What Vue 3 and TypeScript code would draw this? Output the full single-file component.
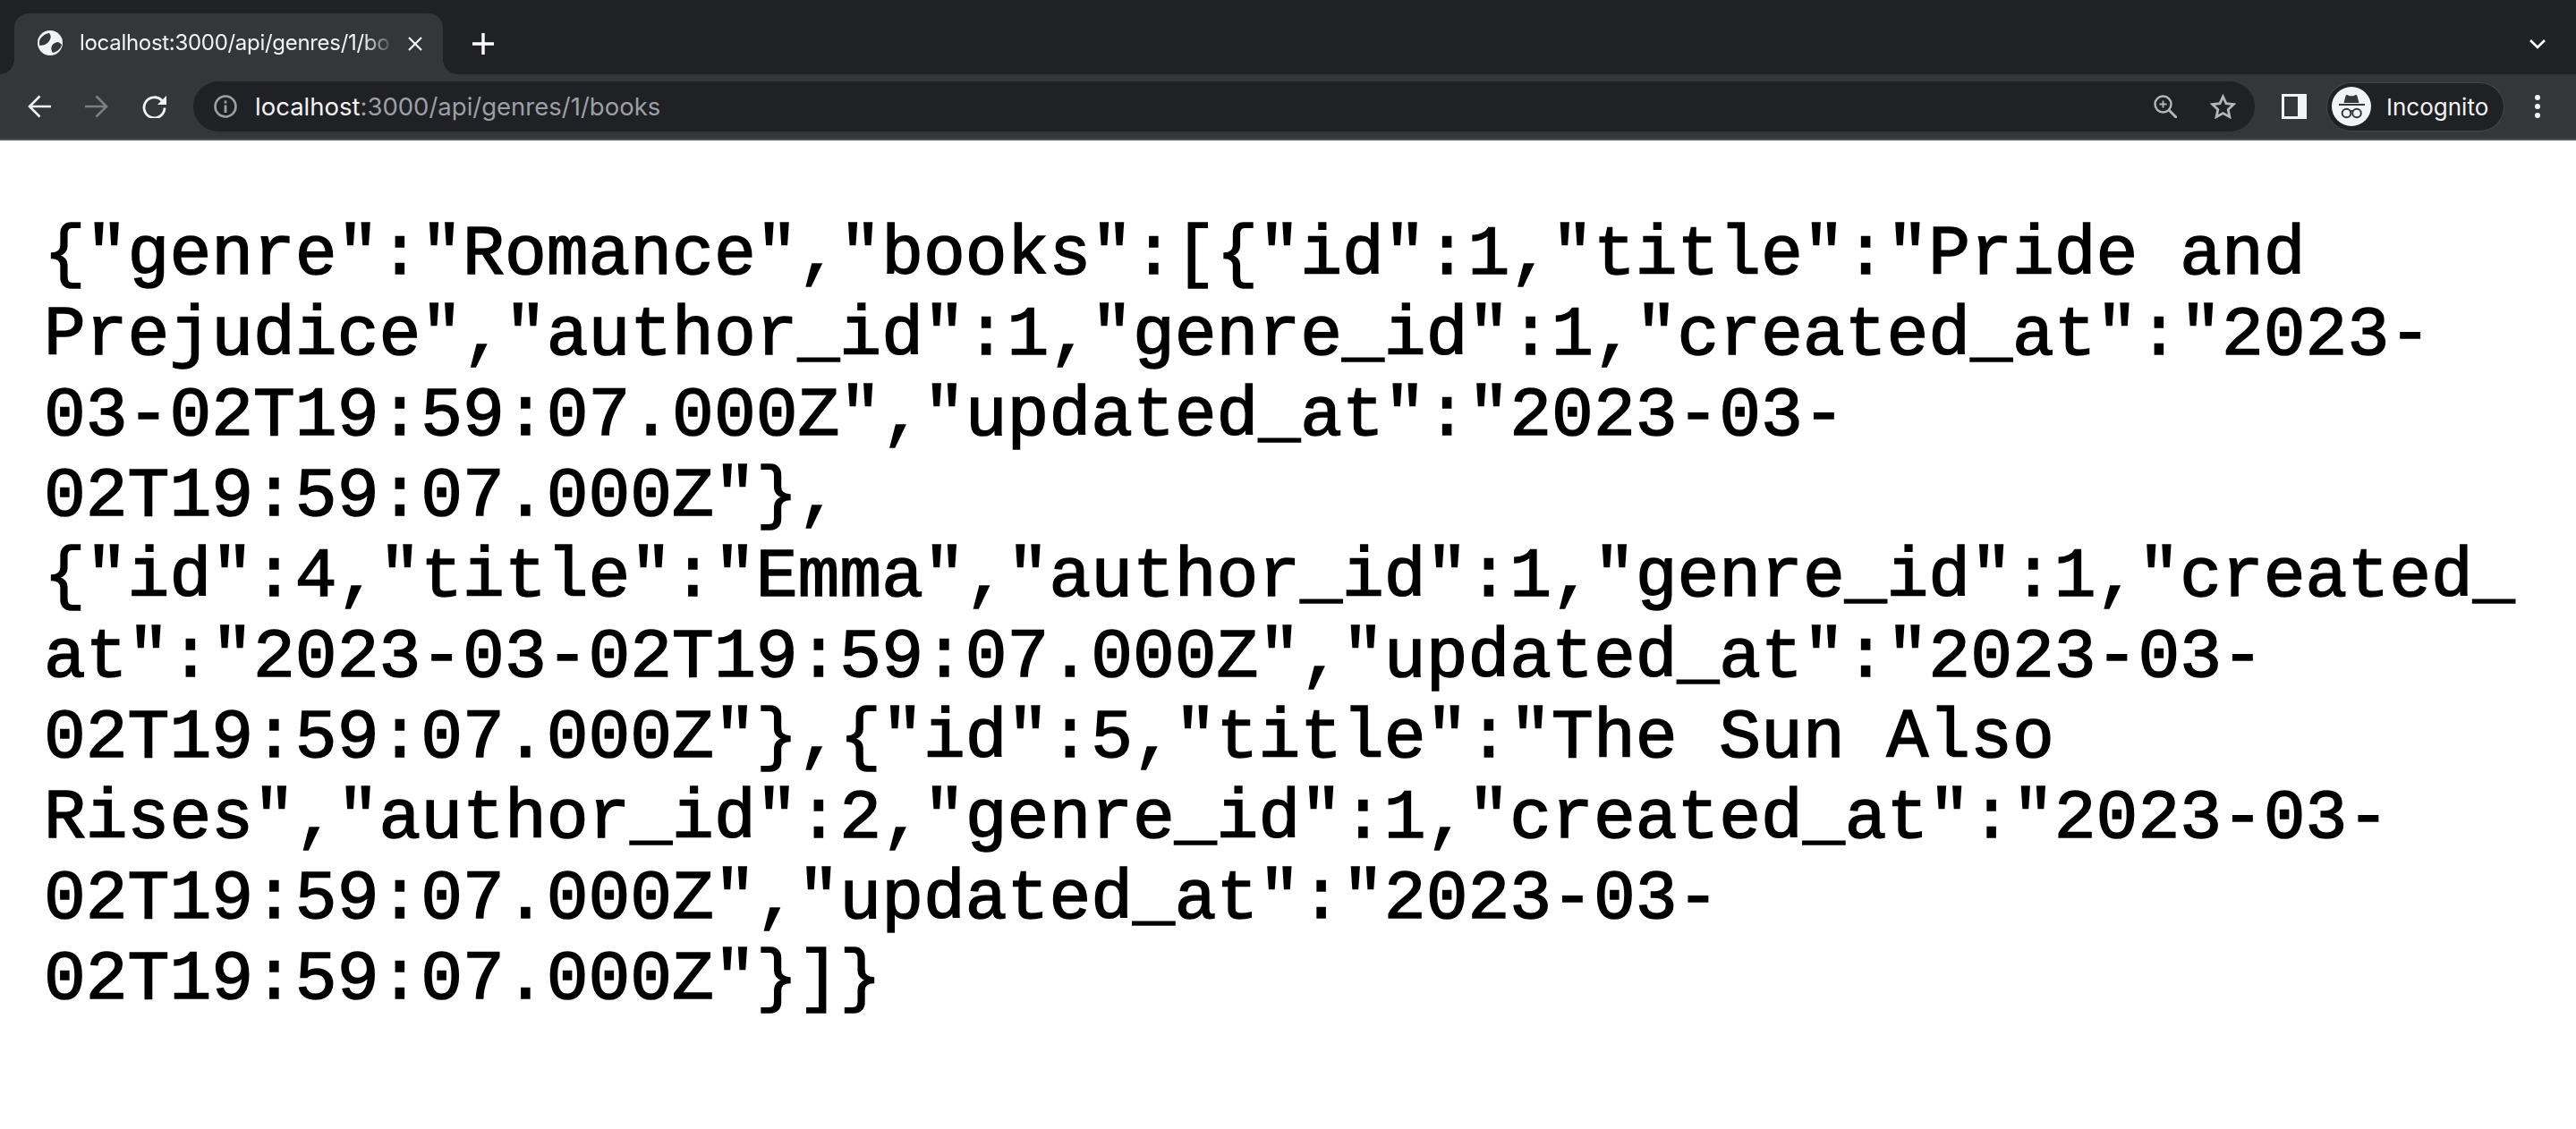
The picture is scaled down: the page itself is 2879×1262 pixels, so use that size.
<script setup lang="ts">
const json = '{"genre":"Romance","books":[{"id":1,"title":"Pride and Prejudice","author_id":1,"genre_id":1,"created_at":"2023-03-02T19:59:07.000Z","updated_at":"2023-03-02T19:59:07.000Z"},{"id":4,"title":"Emma","author_id":1,"genre_id":1,"created_at":"2023-03-02T19:59:07.000Z","updated_at":"2023-03-02T19:59:07.000Z"},{"id":5,"title":"The Sun Also Rises","author_id":2,"genre_id":1,"created_at":"2023-03-02T19:59:07.000Z","updated_at":"2023-03-02T19:59:07.000Z"}]}'
</script>

<template>
  <div class="page">
    <div class="tabstrip">
      <div class="tab">
        <svg class="globe" viewBox="0 0 28 28" width="28" height="28">
          <circle cx="14" cy="14" r="14" fill="#f1f3f4" />
          <path d="M2 12C3 8 7 4 13 3c2 2 2 5 1 7-1 3-4 5-6 6-2 .500-4 1-6 .500z" fill="#35363a" />
          <path d="M17 25c-2-2-2-6-1-8 2-3 5-4 7-4 2 1 3 2 4 3-1 4-5 8-10 9z" fill="#35363a" />
        </svg>
        <span class="tabtitle">localhost:3000/api/genres/1/bo</span>
        <svg class="close" viewBox="0 0 16 16" width="16" height="16">
          <path d="M1 1l14 14M15 1L1 15" stroke="#f1f3f4" stroke-width="2.200" fill="none" />
        </svg>
      </div>
      <svg class="plus" viewBox="0 0 24 24" width="24" height="24">
        <path d="M12 0v24M0 12h24" stroke="#fff" stroke-width="3.400" fill="none" />
      </svg>
      <svg class="chevron" viewBox="0 0 18 11" width="18" height="11">
        <path d="M1 1l8 8 8-8" stroke="#fff" stroke-width="2.600" fill="none" />
      </svg>
    </div>
    <div class="toolbar">
      <svg class="nav" viewBox="0 0 26 26" width="26" height="26">
        <path d="M26 13H2M13.500 1.500L2 13l11.500 11.500" stroke="#f1f3f4" stroke-width="2.600" fill="none" />
      </svg>
      <svg class="nav" viewBox="0 0 26 26" width="26" height="26">
        <path d="M0 13h24M12.500 1.500L24 13 12.500 24.500" stroke="#7d7e81" stroke-width="2.600" fill="none" />
      </svg>
      <svg class="nav" viewBox="0 0 27 26" width="27" height="26">
        <path d="M22 6.500a11.500 11.500 0 1 0 3 8" stroke="#f1f3f4" stroke-width="2.800" fill="none" />
        <path d="M27 1v10H17z" fill="#f1f3f4" />
      </svg>
      <div class="omnibox">
        <svg class="info" viewBox="0 0 26 26" width="26" height="26">
          <circle cx="13" cy="13" r="11.500" stroke="#9aa0a6" stroke-width="2.600" fill="none" />
          <path d="M13 11.500V20M13 6.500v3" stroke="#9aa0a6" stroke-width="2.800" fill="none" />
        </svg>
        <span class="url"><span class="host">localhost</span>:3000/api/genres/1/books</span>
        <svg class="zoomicon" viewBox="0 0 26 26" width="26" height="26">
          <circle cx="10.500" cy="10.500" r="9" stroke="#b4b6b8" stroke-width="2.400" fill="none" />
          <path d="M17 17l9 9" stroke="#b4b6b8" stroke-width="3" fill="none" />
          <path d="M10.500 6.500v8M6.500 10.500h8" stroke="#b4b6b8" stroke-width="1.800" fill="none" />
        </svg>
        <svg class="star" viewBox="0 0 29 28" width="29" height="28">
          <path d="M14.500 3l3.500 7.700 8.300 1-6.100 5.700 1.700 8.200-7.400-4.100-7.400 4.100 1.700-8.200-6.100-5.700 8.300-1z" stroke="#b4b6b8" stroke-width="2.800" fill="none" />
        </svg>
      </div>
      <svg class="panel" viewBox="0 0 28 28" width="28" height="28">
        <path d="M0 0h28v28H0z" fill="#f1f3f4" />
        <path d="M3 3h15v22H3z" fill="#35363a" />
      </svg>
      <div class="profile">
        <div class="avatar">
          <svg viewBox="0 0 44 44" width="44" height="44">
            <path d="M13.500 18l2.200-8.200c.200-.800 1-1 1.600-.700l2 .800c1.700.600 3.700.600 5.400 0l2-.800c.600-.300 1.400-.100 1.600.700l2.200 8.200z" fill="#35363a" />
            <path d="M8 20h29" stroke="#35363a" stroke-width="2" />
            <circle cx="16.500" cy="29.500" r="4.800" stroke="#35363a" stroke-width="2" fill="none" />
            <circle cx="28" cy="29.500" r="4.800" stroke="#35363a" stroke-width="2" fill="none" />
            <path d="M20.500 27.500c1-.700 2.500-.700 3.500 0" stroke="#35363a" stroke-width="1.800" fill="none" />
          </svg>
        </div>
        <span class="incognito">Incognito</span>
      </div>
      <svg class="menu" viewBox="0 0 8 28" width="8" height="28">
        <circle cx="4" cy="4" r="3" fill="#f1f3f4" />
        <circle cx="4" cy="14" r="3" fill="#f1f3f4" />
        <circle cx="4" cy="24" r="3" fill="#f1f3f4" />
      </svg>
    </div>
    <pre class="json">{{ json }}</pre>
  </div>
</template>

<style>
html,
body {
  margin: 0;
  background: #fff;
}
</style>

<style scoped>
.page {
  width: 2879px;
  height: 1262px;
  overflow: hidden;
  background: #fff;
  font-family: Inter, "Liberation Sans", Arial, sans-serif;
}
.tabstrip {
  height: 83px;
  box-sizing: border-box;
  padding: 15px 34px 0 16px;
  background: #202124;
  display: flex;
  align-items: flex-start;
}
.tab {
  position: relative;
  flex: none;
  width: 479px;
  height: 68px;
  box-sizing: border-box;
  padding: 0 23px 0 26px;
  background: #35363a;
  border-radius: 16px 16px 0 0;
  display: flex;
  align-items: center;
}
.tab::before,
.tab::after {
  content: "";
  position: absolute;
  bottom: 0;
  width: 16px;
  height: 16px;
}
.tab::before {
  left: -16px;
  background: radial-gradient(circle at 0 0, #202124 15.500px, #35363a 16px);
}
.tab::after {
  right: -16px;
  background: radial-gradient(circle at 100% 0, #202124 15.500px, #35363a 16px);
}
.globe {
  flex: none;
  margin-top: -2px;
}
.tabtitle {
  flex: none;
  width: 352px;
  margin: -3px 0 0 19px;
  font-size: 24px;
  letter-spacing: -0.3px;
  color: #f1f3f4;
  white-space: nowrap;
  -webkit-mask-image: linear-gradient(to right, #000 90%, transparent 100%);
  mask-image: linear-gradient(to right, #000 90%, transparent 100%);
}
.close {
  flex: none;
  margin-left: auto;
  margin-top: -1px;
}
.plus {
  flex: none;
  margin: 22px 0 0 33px;
}
.chevron {
  flex: none;
  margin: 29px 0 0 auto;
}
.toolbar {
  height: 74px;
  box-sizing: border-box;
  padding: 8px 39px 8px 31px;
  background: #35363a;
  border-bottom: 2px solid #55565a;
  display: flex;
  align-items: center;
}
.nav {
  flex: none;
  margin-right: 38px;
}
.nav:nth-child(3) {
  margin-right: 30px;
}
.omnibox {
  flex: 1;
  height: 56px;
  box-sizing: border-box;
  padding: 0 21px 0 23px;
  background: #202124;
  border-radius: 28px;
  display: flex;
  align-items: center;
}
.info {
  flex: none;
}
.url {
  margin-left: 20px;
  font-size: 27.5px;
  color: #9aa0a6;
}
.host {
  color: #f1f3f4;
}
.zoomicon {
  flex: none;
  margin-left: auto;
}
.star {
  flex: none;
  margin-left: 37px;
}
.panel {
  flex: none;
  margin-left: 30px;
}
.profile {
  flex: none;
  width: 197px;
  height: 53px;
  margin-left: 23px;
  box-sizing: border-box;
  padding-left: 5px;
  border-radius: 27px;
  background: #202124;
  box-shadow: 0 0 0 1px #45464a;
  display: flex;
  align-items: center;
}
.avatar {
  width: 44px;
  height: 44px;
  border-radius: 50%;
  background: #f1f3f4;
}
.avatar svg {
  display: block;
}
.incognito {
  margin-left: 17px;
  font-size: 26px;
  color: #f1f3f4;
}
.menu {
  flex: none;
  margin-left: 34px;
}
.json {
  margin: 0;
  padding: 83px 48px 0 49px;
  font-family: "Liberation Mono", "Courier New", monospace;
  font-size: 78px;
  line-height: 90px;
  color: #000;
  -webkit-text-stroke: 1.6px #000;
  white-space: pre-wrap;
  word-break: break-word;
  overflow-wrap: anywhere;
}
</style>
